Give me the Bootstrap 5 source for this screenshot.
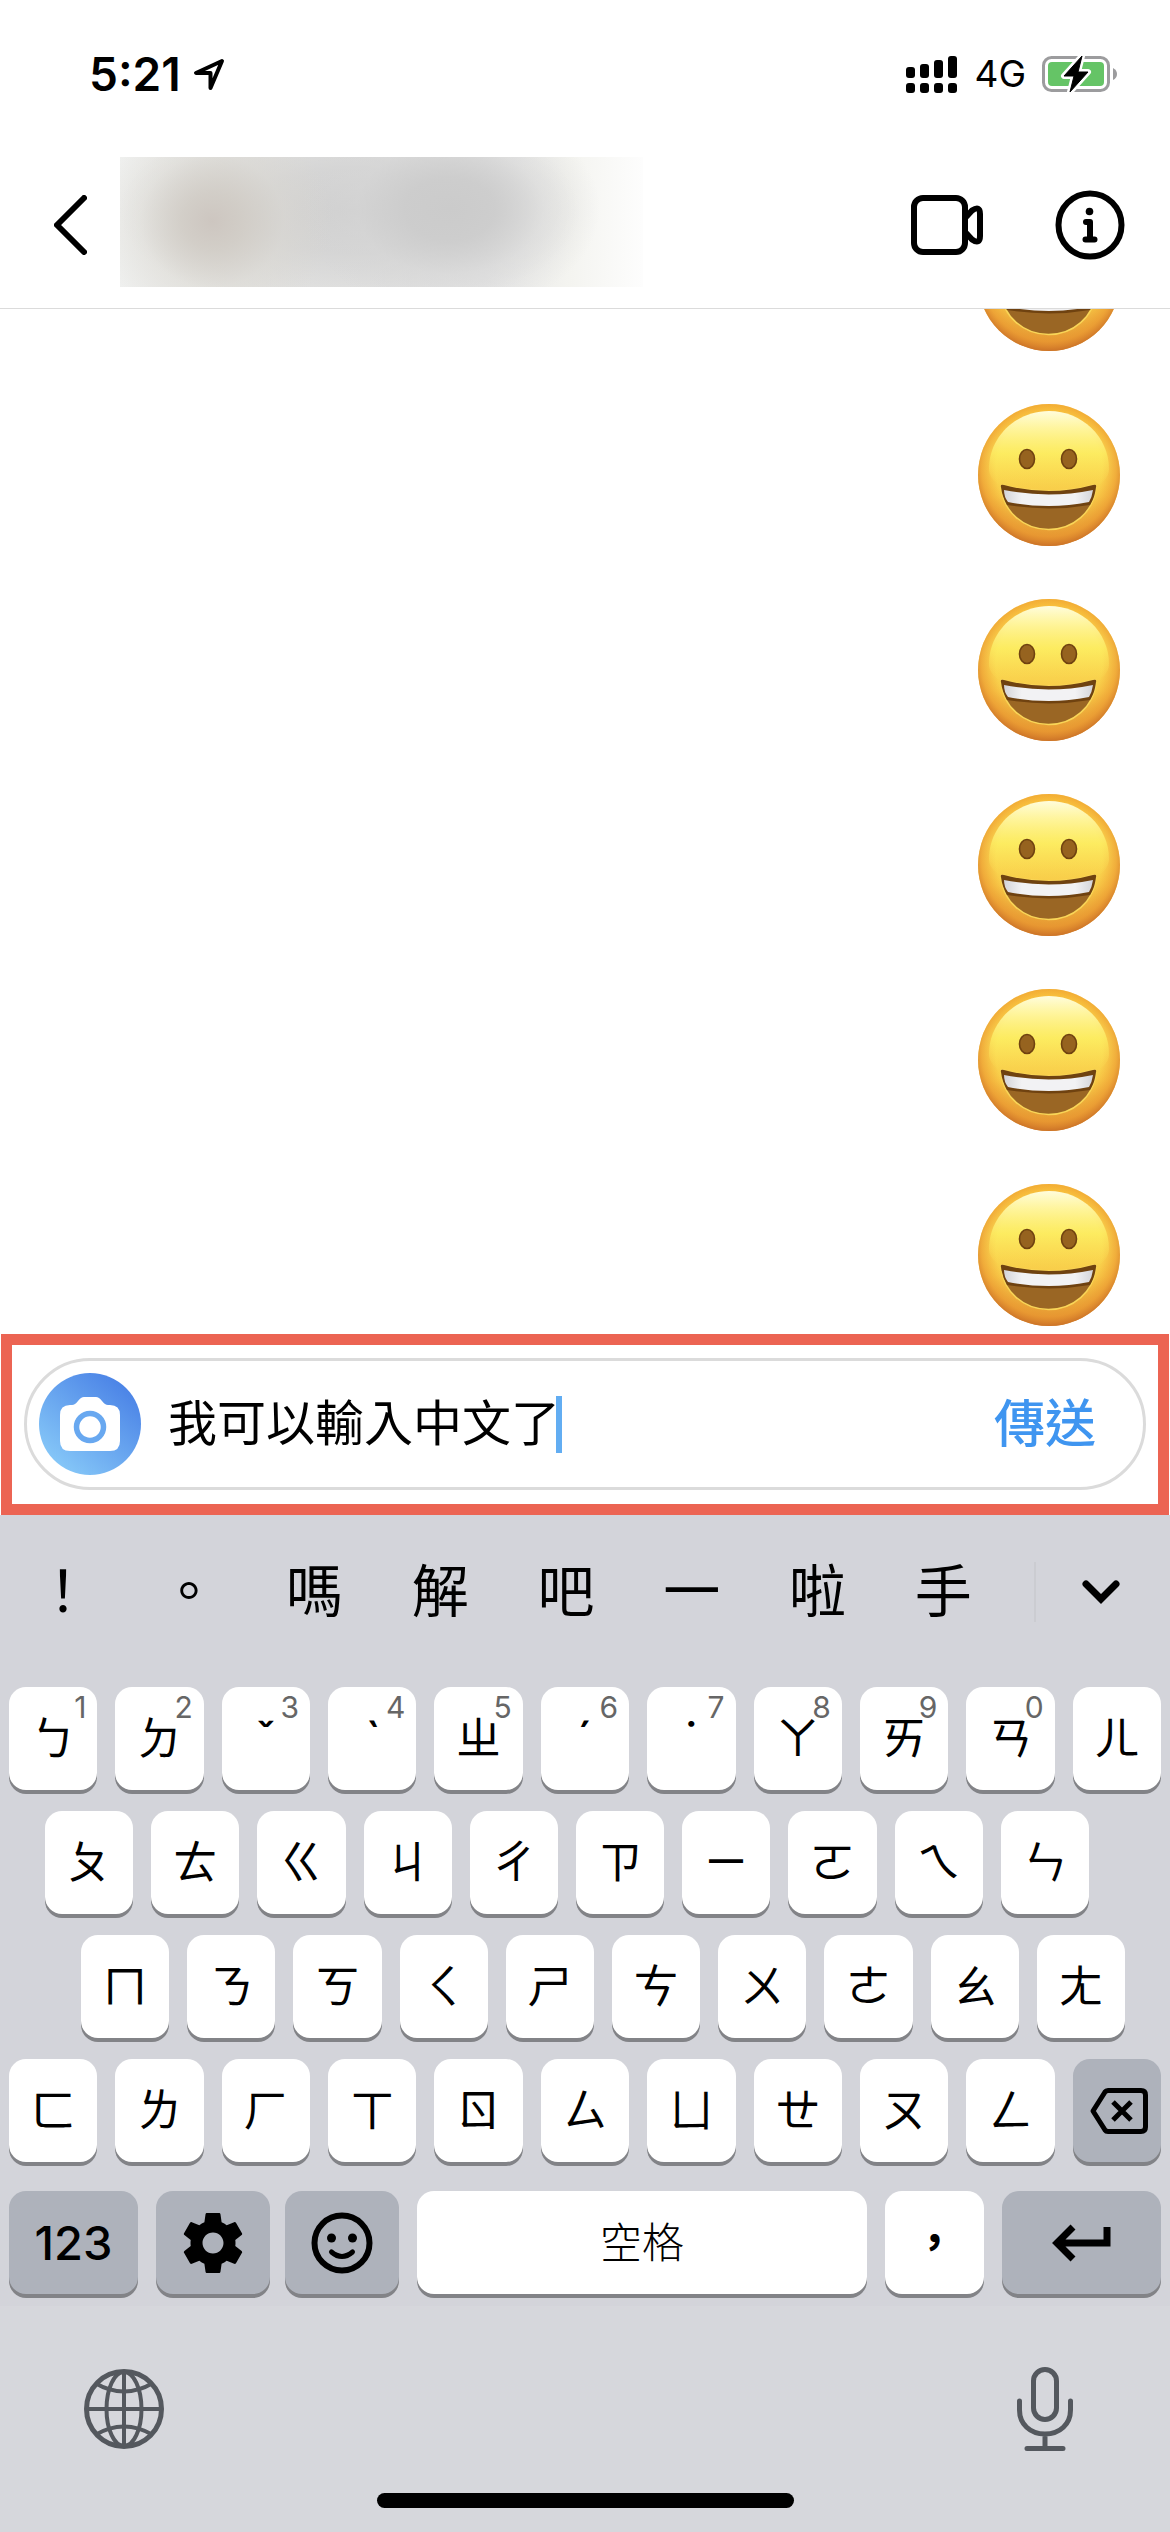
<!DOCTYPE html>
<html lang="zh-Hant">
<head>
<meta charset="utf-8">
<meta name="viewport" content="width=device-width, initial-scale=1">
<title>訊息</title>
<link href="https://cdn.jsdelivr.net/npm/bootstrap@5.3.0/dist/css/bootstrap.min.css" rel="stylesheet">
<style>
  body { font-family: Inter, "Noto Sans CJK TC", sans-serif; color: #000; background: #fff; }
  .btn { --bs-btn-color: #000; --bs-btn-hover-color: #000; --bs-btn-active-color: #000; }
  svg { display: block; flex: none; }
  .screen { height: 100vh; min-height: 1900px; }
  .screen > * { flex-shrink: 0; }
  .status-bar { padding: 46px 52px 0 89px; height: 157px; }
  .status-left { gap: 12px; }
  .status-right { gap: 16px; }
  .status-time { font-size: 46px; line-height: 56px; font-weight: 600; }
  .status-net { font-size: 37px; line-height: 56px; font-weight: 400; }
  .chat-head { height: 152px; border-bottom: 1px solid #dbdbdb; padding: 0 45px 15px 54px; }
  .chat-peer {
    width: 523px; height: 130px; margin: 0 0 6px 33px;
    background:
      radial-gradient(120px 110px at 92px 64px, #cdc6c0 0%, rgba(208,203,196,.85) 25%, rgba(218,215,208,.45) 60%, rgba(230,230,228,0) 100%),
      radial-gradient(150px 105px at 330px 52px, #cbcbcb 0%, rgba(204,204,204,.9) 30%, rgba(214,214,214,.5) 62%, rgba(235,235,235,0) 100%),
      radial-gradient(230px 105px at 230px 54px, #cfcfcf 0%, rgba(210,210,210,.85) 40%, rgba(235,235,235,0) 100%),
      linear-gradient(90deg, #f0f1f0 0%, #e7e7e5 20%, #e6e6e6 70%, #f4f4f0 86%, #fdfdfd 100%);
  }
  .head-tools { gap: 72px; }
  .chat-log { flex: 1 1 0; min-height: 0; gap: 53px; padding: 0 50px 8px; }
  .composer { margin: 0 1px; padding: 13px 12px 14px; border: 11px solid #ec6453; }
  .composer-pill { border: 3px solid #dbdbdb; height: 132px; padding: 0 47px 0 12px; }
  .camera-btn { width: 102px; height: 102px; background: linear-gradient(220deg, #4a82e6 12%, #86c8f8 88%); }
  .message-input { width: 388px; margin-left: 27px; font-size: 49px; line-height: 72px; outline: 0; color: #000; }
  .text-caret { width: 6px; height: 57px; background: #62adf2; }
  .send-btn { --bs-btn-color: #3f95f0; font-size: 51px; line-height: 72px; font-weight: 500; }
  .keyboard { background: #d3d4da; padding-bottom: 12px; }
  .candidates { height: 154px; margin-bottom: 18px; }
  .cand { width: 126px; font-size: 57px; line-height: 72px; }
  .cand-line { width: 2px; height: 60px; background: #cbccd1; margin-left: 28px; }
  .cand-more { padding: 20px 50px 20px 46px; }
  .key-rows { padding: 0 9px; gap: 21px; }
  .key-row { gap: 18px; }
  .key-row-2 { padding: 0 72px 0 36px; }
  .key-row-3 { padding: 0 36px 0 72px; }
  .key-row-5 { margin-top: 8px; }
  .key {
    flex: 1 1 0; min-width: 0; height: 103px; border-radius: 17px; background: #fff;
    box-shadow: 0 4px 0 #828387; font-size: 45px; line-height: 60px;
  }
  .key-gray { background: #aeb2bb; }
  .key-digit { top: 4px; right: 11px; font-size: 30px; line-height: 32px; color: #666; }
  .key-tone { font-weight: 500; }
  .key-tone .key-digit { font-weight: 400; }
  .key-num { flex-grow: 129; font-size: 47px; font-weight: 500; }
  .key-pair { flex: 243 1 0; gap: 15px; }
  .key-space { flex-grow: 450; font-size: 42px; font-weight: 300; }
  .key-comma { flex-grow: 99; font-weight: 700; }
  .key-return { flex-grow: 159; }
  .dock { background: #d6d7dc; padding: 60px 0 24px; }
  .dock-tools { padding: 0 97px 0 84px; }
  .dock .btn { --bs-btn-color: #54585e; }
  .home-bar { width: 417px; height: 15px; background: #000; margin-top: 41px; }
</style>
</head>
<body>
<svg width="0" height="0" class="position-absolute" aria-hidden="true">
  <defs>
    <linearGradient id="skin" x1="0" y1="0" x2="0" y2="1">
      <stop offset="0" stop-color="#fbc83c"/><stop offset=".35" stop-color="#fbdf55"/>
      <stop offset=".65" stop-color="#f8cb48"/><stop offset="1" stop-color="#de9432"/>
    </linearGradient>
    <radialGradient id="rim" cx=".5" cy=".46" r=".55">
      <stop offset=".68" stop-color="#f0972e" stop-opacity="0"/>
      <stop offset=".86" stop-color="#ea922e" stop-opacity=".6"/>
      <stop offset="1" stop-color="#c66c26"/>
    </radialGradient>
    <linearGradient id="gloss" x1="0" y1="0" x2="0" y2="1">
      <stop offset="0" stop-color="#fffddc"/><stop offset=".2" stop-color="#fff9a8" stop-opacity=".9"/>
      <stop offset=".5" stop-color="#fdf165" stop-opacity=".7"/><stop offset=".9" stop-color="#fbdc55" stop-opacity="0"/>
    </linearGradient>
    <linearGradient id="teeth" x1="0" y1="0" x2="1" y2="0">
      <stop offset="0" stop-color="#d4d4d8"/><stop offset=".2" stop-color="#f2f2f4"/>
      <stop offset=".8" stop-color="#f2f2f4"/><stop offset="1" stop-color="#d4d4d8"/>
    </linearGradient>
    <symbol id="grin" viewBox="0 0 142 142">
      <circle cx="71" cy="71" r="71" fill="url(#skin)"/>
      <circle cx="71" cy="71" r="71" fill="url(#rim)"/>
      <path d="M71 7C104 7 131 33 131 65 131 82 104 92 71 92S11 82 11 65C11 33 38 7 71 7Z" fill="url(#gloss)"/>
      <ellipse cx="49" cy="55" rx="7.500" ry="9.500" fill="#96631f" stroke="#6f4210" stroke-width="1.600"/>
      <ellipse cx="91" cy="55" rx="7.500" ry="9.500" fill="#96631f" stroke="#6f4210" stroke-width="1.600"/>
      <path d="M23 83Q22 80 26 81 71 93 115 81 119 80 118 83C116 108 95 125.500 70.500 125.500S25 108 23 83Z" fill="#9a6624" stroke="#f9d557" stroke-width="1.500"/>
      <path d="M23 83Q22 80 26 81 71 93 115 81 119 80 118 83C117 91 115 96 112 101Q71 108 29 101 24 92 23 83Z" fill="#6f4210"/>
      <path d="M26 86Q71 95 115 86 114 93 111 98 71 106 30 98 26 93 26 86Z" fill="url(#teeth)"/>
    </symbol>
    <clipPath id="globe-clip"><circle cx="40" cy="40" r="38"/></clipPath>
  </defs>
</svg>

<div class="screen d-flex flex-column overflow-hidden">
  <div class="status-bar d-flex justify-content-between align-items-start">
    <div class="status-left d-flex align-items-center">
      <span class="status-time">5:21</span>
      <svg width="32" height="34" viewBox="0 0 32 34" fill="none" stroke="#000" stroke-width="4" stroke-linejoin="round" aria-hidden="true"><path d="M29 4 3 16H17.500V31Z"/></svg>
    </div>
    <div class="status-right d-flex align-items-center">
      <svg width="52" height="38" viewBox="0 0 52 38" aria-label="訊號">
        <rect x="0" y="12" width="9" height="11" rx="3"/><rect x="14" y="9" width="9" height="14" rx="3"/><rect x="28" y="5" width="9" height="18" rx="3"/><rect x="42" y="1" width="9" height="22" rx="3"/>
        <rect x="0" y="28" width="9" height="10" rx="3"/><rect x="14" y="28" width="9" height="10" rx="3"/><rect x="28" y="28" width="9" height="10" rx="3"/><rect x="42" y="28" width="9" height="10" rx="3"/>
      </svg>
      <span class="status-net">4G</span>
      <svg width="76" height="38" viewBox="0 0 76 38" aria-label="充電中">
        <rect x="1.500" y="2.500" width="65" height="33" rx="8" fill="none" stroke="#9c9c9e" stroke-width="3"/>
        <rect x="6" y="7" width="56" height="24" rx="4" fill="#65c466"/>
        <path d="M71 13Q75 15 75 19T71 25Z" fill="#9c9c9e"/>
        <path d="M40 1 22 21H32L28 37 46 17H36Z" stroke="#fff" stroke-width="6" fill="#fff" stroke-linejoin="round"/>
        <path d="M40 1 22 21H32L28 37 46 17H36Z" stroke="#000" stroke-width="1" stroke-linejoin="round"/>
      </svg>
    </div>
  </div>

  <header class="chat-head d-flex align-items-center">
    <button class="btn p-0 border-0" aria-label="返回">
      <svg width="33" height="60" viewBox="0 0 33 60" fill="none" stroke="#000" stroke-width="6" stroke-linecap="round" stroke-linejoin="round"><path d="M30 3 3 30 30 57"/></svg>
    </button>
    <div class="chat-peer"></div>
    <div class="head-tools d-flex align-items-center ms-auto">
      <button class="btn p-0 border-0" aria-label="視訊通話">
        <svg width="72" height="60" viewBox="0 0 72 60" fill="none" stroke="#000" stroke-width="6" stroke-linejoin="round"><rect x="3" y="3" width="51" height="54" rx="9"/><path d="M55 22 61 15.500Q69 10 69 19V41Q69 50 61 44.500L55 38"/></svg>
      </button>
      <button class="btn p-0 border-0" aria-label="詳細資料">
        <svg width="70" height="70" viewBox="0 0 70 70" fill="none" stroke="#000" stroke-width="6" stroke-linecap="round" stroke-linejoin="round"><circle cx="35" cy="35" r="31.500"/><circle cx="34.500" cy="21.500" r="3.800" fill="#000" stroke="none"/><path d="M31 32H35V49M30.500 49.500H39.500"/></svg>
      </button>
    </div>
  </header>

  <main class="chat-log d-flex flex-column justify-content-end align-items-end overflow-hidden">
    <svg width="142" height="142" role="img" aria-label="笑臉"><use href="#grin"/></svg>
    <svg width="142" height="142" role="img" aria-label="笑臉"><use href="#grin"/></svg>
    <svg width="142" height="142" role="img" aria-label="笑臉"><use href="#grin"/></svg>
    <svg width="142" height="142" role="img" aria-label="笑臉"><use href="#grin"/></svg>
    <svg width="142" height="142" role="img" aria-label="笑臉"><use href="#grin"/></svg>
    <svg width="142" height="142" role="img" aria-label="笑臉"><use href="#grin"/></svg>
  </main>

  <form class="composer">
    <div class="composer-pill rounded-pill d-flex align-items-center">
      <button type="button" class="camera-btn btn p-0 border-0 rounded-circle d-flex align-items-center justify-content-center" aria-label="相機">
        <svg width="60" height="54" viewBox="0 0 60 54"><path d="M10 8H12Q15 8 18 4T24 0H36Q39 0 42 4T48 8H50Q60 8 60 18V44Q60 54 50 54H10Q0 54 0 44V18Q0 8 10 8Z" fill="#fff"/><circle cx="30" cy="30" r="13.500" fill="#fff" stroke="#68a8f0" stroke-width="5.500"/></svg>
      </button>
      <input class="message-input border-0 p-0 bg-transparent" type="text" aria-label="訊息" value="我可以輸入中文了">
      <span class="text-caret"></span>
      <button type="button" class="send-btn btn p-0 border-0 ms-auto">傳送</button>
    </div>
  </form>

  <section class="keyboard" aria-label="注音鍵盤">
    <div class="candidates d-flex align-items-center">
      <button class="cand btn p-0 border-0">！</button>
      <button class="cand btn p-0 border-0">。</button>
      <button class="cand btn p-0 border-0">嗎</button>
      <button class="cand btn p-0 border-0">解</button>
      <button class="cand btn p-0 border-0">吧</button>
      <button class="cand btn p-0 border-0">一</button>
      <button class="cand btn p-0 border-0">啦</button>
      <button class="cand btn p-0 border-0">手</button>
      <span class="cand-line"></span>
      <button class="cand-more btn border-0 ms-auto" aria-label="更多候選字">
        <svg width="38" height="26" viewBox="0 0 38 26" fill="none" stroke="#000" stroke-width="7" stroke-linecap="round"><path d="M4 5 19 20 34 5"/></svg>
      </button>
    </div>
    <div class="key-rows d-flex flex-column">
      <div class="key-row d-flex">
        <button class="key btn p-0 border-0 position-relative">ㄅ<span class="key-digit position-absolute">1</span></button>
        <button class="key btn p-0 border-0 position-relative">ㄉ<span class="key-digit position-absolute">2</span></button>
        <button class="key key-tone btn p-0 border-0 position-relative">ˇ<span class="key-digit position-absolute">3</span></button>
        <button class="key key-tone btn p-0 border-0 position-relative">ˋ<span class="key-digit position-absolute">4</span></button>
        <button class="key btn p-0 border-0 position-relative">ㄓ<span class="key-digit position-absolute">5</span></button>
        <button class="key key-tone btn p-0 border-0 position-relative">ˊ<span class="key-digit position-absolute">6</span></button>
        <button class="key key-tone btn p-0 border-0 position-relative">˙<span class="key-digit position-absolute">7</span></button>
        <button class="key btn p-0 border-0 position-relative">ㄚ<span class="key-digit position-absolute">8</span></button>
        <button class="key btn p-0 border-0 position-relative">ㄞ<span class="key-digit position-absolute">9</span></button>
        <button class="key btn p-0 border-0 position-relative">ㄢ<span class="key-digit position-absolute">0</span></button>
        <button class="key btn p-0 border-0">ㄦ</button>
      </div>
      <div class="key-row key-row-2 d-flex">
        <button class="key btn p-0 border-0">ㄆ</button>
        <button class="key btn p-0 border-0">ㄊ</button>
        <button class="key btn p-0 border-0">ㄍ</button>
        <button class="key btn p-0 border-0">ㄐ</button>
        <button class="key btn p-0 border-0">ㄔ</button>
        <button class="key btn p-0 border-0">ㄗ</button>
        <button class="key btn p-0 border-0">ㄧ</button>
        <button class="key btn p-0 border-0">ㄛ</button>
        <button class="key btn p-0 border-0">ㄟ</button>
        <button class="key btn p-0 border-0">ㄣ</button>
      </div>
      <div class="key-row key-row-3 d-flex">
        <button class="key btn p-0 border-0">ㄇ</button>
        <button class="key btn p-0 border-0">ㄋ</button>
        <button class="key btn p-0 border-0">ㄎ</button>
        <button class="key btn p-0 border-0">ㄑ</button>
        <button class="key btn p-0 border-0">ㄕ</button>
        <button class="key btn p-0 border-0">ㄘ</button>
        <button class="key btn p-0 border-0">ㄨ</button>
        <button class="key btn p-0 border-0">ㄜ</button>
        <button class="key btn p-0 border-0">ㄠ</button>
        <button class="key btn p-0 border-0">ㄤ</button>
      </div>
      <div class="key-row d-flex">
        <button class="key btn p-0 border-0">ㄈ</button>
        <button class="key btn p-0 border-0">ㄌ</button>
        <button class="key btn p-0 border-0">ㄏ</button>
        <button class="key btn p-0 border-0">ㄒ</button>
        <button class="key btn p-0 border-0">ㄖ</button>
        <button class="key btn p-0 border-0">ㄙ</button>
        <button class="key btn p-0 border-0">ㄩ</button>
        <button class="key btn p-0 border-0">ㄝ</button>
        <button class="key btn p-0 border-0">ㄡ</button>
        <button class="key btn p-0 border-0">ㄥ</button>
        <button class="key key-gray btn p-0 border-0 d-flex align-items-center justify-content-center" aria-label="刪除">
          <svg class="ms-1" width="58" height="46" viewBox="0 0 58 46" fill="none" stroke="#000" stroke-width="5" stroke-linejoin="round"><path d="M18 2.500H51Q55.500 2.500 55.500 7V39Q55.500 43.500 51 43.500H18Q16 43.500 15 42L3 23 15 4Q16 2.500 18 2.500Z"/><path d="M23 14 41 32M41 14 23 32"/></svg>
        </button>
      </div>
      <div class="key-row key-row-5 d-flex">
        <button class="key key-gray key-num btn p-0 border-0">123</button>
        <div class="key-pair d-flex">
          <button class="key key-gray btn p-0 border-0 d-flex align-items-center justify-content-center" aria-label="設定">
            <svg width="72" height="72" viewBox="0 0 24 24"><path d="M19.430 12.980c.04-.32.07-.64.07-.98s-.03-.66-.07-.98l2.110-1.650c.19-.15.24-.42.12-.64l-2-3.460c-.12-.22-.39-.3-.61-.22l-2.490 1c-.52-.4-1.080-.73-1.690-.98l-.38-2.650C14.460 2.180 14.250 2 14 2h-4c-.25 0-.46.18-.49.42l-.38 2.650c-.61.25-1.170.59-1.690.98l-2.490-1c-.23-.09-.49 0-.61.22l-2 3.460c-.13.22-.07.49.12.64l2.110 1.650c-.04.32-.07.65-.07.98s.03.66.07.98l-2.110 1.650c-.19.15-.24.42-.12.64l2 3.460c.12.22.39.3.61.22l2.490-1c.52.4 1.080.73 1.690.98l.38 2.650c.03.24.24.42.49.42h4c.25 0 .46-.18.49-.42l.38-2.650c.61-.25 1.170-.59 1.690-.98l2.490 1c.23.09.49 0 .61-.22l2-3.460c.12-.22.07-.49-.12-.64l-2.110-1.650zM12 15.500c-1.930 0-3.500-1.570-3.500-3.500s1.570-3.500 3.500-3.500 3.500 1.570 3.500 3.500-1.570 3.500-3.500 3.500z"/></svg>
          </button>
          <button class="key key-gray btn p-0 border-0 d-flex align-items-center justify-content-center" aria-label="表情符號">
            <svg width="62" height="62" viewBox="0 0 62 62" fill="none" stroke="#000" stroke-width="6" stroke-linecap="round"><circle cx="31" cy="31" r="27.500"/><path d="M20.500 40Q31 49 41.500 40" stroke-width="5"/><circle cx="20.500" cy="26" r="4.500" fill="#000" stroke="none"/><circle cx="41.500" cy="26" r="4.500" fill="#000" stroke="none"/></svg>
          </button>
        </div>
        <button class="key key-space btn p-0 border-0">空格</button>
        <button class="key key-comma btn p-0 border-0">，</button>
        <button class="key key-gray key-return btn p-0 border-0 d-flex align-items-center justify-content-center" aria-label="換行">
          <svg width="60" height="38" viewBox="0 0 60 38" fill="none" stroke="#000" stroke-width="7"><path d="M55 3V19H5M21 3 5 19 21 35"/></svg>
        </button>
      </div>
    </div>
  </section>

  <footer class="dock">
    <div class="dock-tools d-flex justify-content-between align-items-center">
      <button class="btn p-0 border-0" aria-label="切換鍵盤">
        <svg width="80" height="80" viewBox="0 0 80 80" fill="none" stroke="currentColor" stroke-width="4"><circle cx="40" cy="40" r="37.500" stroke-width="5"/><g clip-path="url(#globe-clip)"><path d="M40 2V78M2 40H78"/><ellipse cx="40" cy="40" rx="17.500" ry="37"/><path d="M11 14Q40 31 69 14M11 66Q40 49 69 66"/></g></svg>
      </button>
      <button class="btn p-0 border-0" aria-label="聽寫">
        <svg width="56" height="86" viewBox="0 0 56 86" fill="none" stroke="currentColor" stroke-width="5" stroke-linecap="round"><rect x="16.500" y="3.500" width="23" height="50" rx="11.500"/><path d="M2.500 35V44C2.500 58 13 68 28 68S53.500 58 53.500 44V35M28 68V82M10 82.500H46"/></svg>
      </button>
    </div>
    <div class="d-flex justify-content-center">
      <div class="home-bar rounded-pill"></div>
    </div>
  </footer>
</div>
<script src="https://cdn.jsdelivr.net/npm/bootstrap@5.3.0/dist/js/bootstrap.bundle.min.js"></script>
</body>
</html>
